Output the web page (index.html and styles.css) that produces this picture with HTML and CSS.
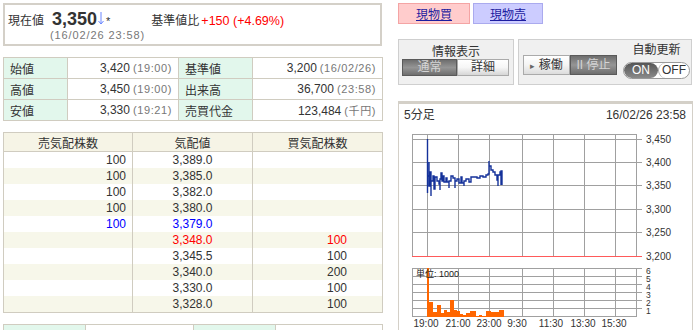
FILE: index.html
```html
<!DOCTYPE html>
<html lang="ja">
<head>
	<meta charset="UTF-8">
	<title>株価ボード</title>
	<link rel="stylesheet" href="styles.css">
</head>
<body>
	<div class="page">
		<div class="left">
			<div class="now">
				<div class="now-row">
					<span class="now-label">現在値</span>
					<span class="now-price">3,350</span>
					<svg class="arrow" width="6" height="13" viewBox="0 0 6 13"><path d="M3 0V12M0.5 9L3 12L5.5 9" fill="none" stroke="#6a86ff" stroke-width="1"/></svg>
					<span class="star">*</span>
					<span class="diff-label">基準値比</span>
					<span class="diff">+150 (+4.69%)</span>
				</div>
				<div class="now-time">(16/02/26 23:58)</div>
			</div>

			<table class="quote">
				<colgroup><col style="width:64px"><col style="width:111px"><col style="width:74px"><col style="width:130px"></colgroup>
				<tr>
					<td class="name">始値</td><td class="val">3,420<small>(19:00)</small></td>
					<td class="name">基準値</td><td class="val">3,200<small>(16/02/26)</small></td>
				</tr>
				<tr>
					<td class="name">高値</td><td class="val">3,450<small>(19:00)</small></td>
					<td class="name">出来高</td><td class="val">36,700<small>(23:58)</small></td>
				</tr>
				<tr>
					<td class="name">安値</td><td class="val">3,330<small>(19:21)</small></td>
					<td class="name">売買代金</td><td class="val">123,484<small>(千円)</small></td>
				</tr>
			</table>

			<table class="book">
				<colgroup><col style="width:129px"><col style="width:120px"><col style="width:130px"></colgroup>
				<thead>
					<tr><th>売気配株数</th><th>気配値</th><th>買気配株数</th></tr>
				</thead>
				<tbody>
					<tr><td class="ask">100</td><td class="px">3,389.0</td><td class="bid"></td></tr>
					<tr><td class="ask">100</td><td class="px">3,385.0</td><td class="bid"></td></tr>
					<tr><td class="ask">100</td><td class="px">3,382.0</td><td class="bid"></td></tr>
					<tr><td class="ask">100</td><td class="px">3,380.0</td><td class="bid"></td></tr>
					<tr class="blue"><td class="ask">100</td><td class="px">3,379.0</td><td class="bid"></td></tr>
					<tr class="red"><td class="ask"></td><td class="px">3,348.0</td><td class="bid">100</td></tr>
					<tr><td class="ask"></td><td class="px">3,345.5</td><td class="bid">100</td></tr>
					<tr><td class="ask"></td><td class="px">3,340.0</td><td class="bid">200</td></tr>
					<tr><td class="ask"></td><td class="px">3,330.0</td><td class="bid">100</td></tr>
					<tr><td class="ask"></td><td class="px">3,328.0</td><td class="bid">100</td></tr>
				</tbody>
			</table>

			<table class="quote">
				<colgroup><col style="width:82px"><col style="width:108px"><col style="width:82px"><col style="width:107px"></colgroup>
				<tr><td class="name"></td><td class="val"></td><td class="name"></td><td class="val"></td></tr>
			</table>
		</div>

		<div class="right">
			<div class="trade">
				<a class="buy" href="javascript:;">現物買</a>
				<a class="sell" href="javascript:;">現物売</a>
			</div>

			<div class="ctrl">
				<div class="box view">
					<div class="box-title">情報表示</div>
					<div class="seg">
						<span class="on">通常</span><span class="off">詳細</span>
					</div>
				</div>
				<div class="box auto">
					<div class="run">
						<span class="go"><i class="tri">▸</i> 稼働</span><span class="stop">II 停止</span>
					</div>
					<div class="upd">
						<div class="upd-title">自動更新</div>
						<div class="pill"><span class="pill-on">ON</span><span class="pill-off">OFF</span></div>
					</div>
				</div>
			</div>

			<div class="chart-box">
				<div class="chart-head"><span>5分足</span><span>16/02/26 23:58</span></div>
				<svg class="chart" width="293" height="200" viewBox="399 130 293 200">
					<g fill="none" stroke="#a0a0a0" stroke-width="1">
						<rect x="412.5" y="134.5" width="224" height="122"/>
						<path d="M412 139.5H642M412 162.5H642M412 185.5H642M412 209.5H642M412 232.5H642"/>
						<path d="M427.5 134V256M458.5 134V256M489.5 134V256M522.5 134V256M553.5 134V256M584.5 134V256M615.5 134V256"/>
						<rect x="412.5" y="268.5" width="224" height="48"/>
						<path d="M412 276.5H642M412 284.5H642M412 292.5H642M412 300.5H642M412 308.5H642M636 268.5H642"/>
						<path d="M427.5 268V317M458.5 268V317M489.5 268V317M522.5 268V317M553.5 268V317M584.5 268V317M615.5 268V317"/>
					</g>
					<path d="M412 256.5H642" stroke="#ff5a5a" stroke-width="1.2"/>
					<path class="price-line" d="M427.5 139V193M427.5 176H429V162V186H430V172H431V196V181H433V176H434V189H435V177H437V181H439V184H440V190V179H441V173H442V181H443V176H444V182H446V178H447V182H449V188V181H451V176H453V178H455V188V181H457V179H459V183H461V177H462V183H464V186V181H466V179H469V182H471V177H474V177H477V178H480V176H483V177H486V175H488V174H489V161V166H491V170H493V172H495V175H497V180H498V186V175H500V172H501V185V171H502V185"/>
					<g class="axis">
						<text x="646" y="143">3,450</text>
						<text x="646" y="166">3,400</text>
						<text x="646" y="189">3,350</text>
						<text x="646" y="213">3,300</text>
						<text x="646" y="236">3,250</text>
						<text x="646" y="260">3,200</text>
					</g>
					<g class="vol-axis">
						<text x="646" y="274">6</text>
						<text x="646" y="282">5</text>
						<text x="646" y="290">4</text>
						<text x="646" y="298">3</text>
						<text x="646" y="306">2</text>
						<text x="646" y="314">1</text>
					</g>
					<g fill="#ff6600">
						<rect x="427" y="268" width="2" height="49"/>
						<rect x="429" y="302" width="4" height="15"/>
						<rect x="433" y="312" width="4" height="5"/>
						<rect x="437" y="305" width="4" height="12"/>
						<rect x="441" y="313" width="3" height="4"/>
						<rect x="444" y="310" width="3" height="7"/>
						<rect x="447" y="312" width="3" height="5"/>
						<rect x="450" y="300" width="4" height="17"/>
						<rect x="454" y="310" width="3" height="7"/>
						<rect x="457" y="311" width="3" height="6"/>
						<rect x="460" y="314" width="3" height="3"/>
						<rect x="463" y="315" width="3" height="2"/>
						<rect x="466" y="313" width="4" height="4"/>
						<rect x="470" y="311" width="6" height="6"/>
						<rect x="476" y="316" width="3" height="1"/>
						<rect x="479" y="315" width="3" height="2"/>
						<rect x="482" y="316" width="4" height="1"/>
						<rect x="486" y="311" width="5" height="6"/>
						<rect x="491" y="312" width="4" height="5"/>
						<rect x="495" y="312" width="4" height="5"/>
						<rect x="499" y="310" width="5" height="7"/>
					</g>
					<text class="unit" x="416" y="277">単位: 1000</text>
					<g class="axis" text-anchor="middle">
						<text x="426" y="327">19:00</text>
						<text x="458" y="327">21:00</text>
						<text x="489" y="327">23:00</text>
						<text x="517" y="327">9:30</text>
						<text x="551" y="327">11:30</text>
						<text x="583" y="327">13:30</text>
						<text x="614" y="327">15:30</text>
					</g>
				</svg>
			</div>
		</div>
	</div>
</body>
</html>
```

FILE: styles.css
```css
*{box-sizing: border-box;}
body{margin: 0;font-family: "Liberation Sans", "Noto Sans CJK JP", sans-serif;font-size: 12px;color: #333;background: #fff;}
table{border-collapse: collapse;table-layout: fixed;}
td,th{padding: 0;}

.page{display: flex;gap: 16px;padding: 3px 0 0 3px;}
.left{width: 379px;flex: none;display: flex;flex-direction: column;gap: 11px;}
.right{width: 295px;flex: none;}

/* 現在値 */
.now{height: 43px;border: 2px solid #d4d0c8;padding: 4px 0 0 3px;}
.now-row{display: flex;align-items: baseline;height: 20px;line-height: 20px;}
.now-price{font-size: 18px;font-weight: bold;margin-left: 8px;}
.arrow{margin: 0 0 -2px 1px;}
.star{font-size: 11px;margin-left: 2px;align-self: flex-start;line-height: 14px;margin-top: 5px;}
.diff-label{margin-left: 41px;}
.diff{color: #f00;font-size: 12.5px;margin-left: 2px;}
.now-time{margin-left: 42px;font-size: 11px;letter-spacing: 0.9px;color: #777;line-height: 12px;}

/* 四本値 */
.quote{width: 379px;}
.quote td{height: 21px;border: 1px solid #d0ccc0;}
.quote .name{background: #e2f7ec;padding-left: 6px;}
.quote .val{text-align: right;padding-right: 6px;}
.quote small{font-size: 11px;color: #777;letter-spacing: 0.6px;margin-left: 3px;}

/* 板 */
.book{width: 379px;border: 1px solid #d0ccc0;}
.book th{height: 19px;background: #f6f4e6;font-weight: normal;border: 1px solid #d0ccc0;}
.book td{height: 16px;line-height: 16px;border-left: 1px solid #d0ccc0;border-right: 1px solid #d0ccc0;}
.book tbody tr:nth-child(even) td{background: #f7f7ea;}
.book .ask{text-align: right;padding-right: 6px;}
.book .px{text-align: center;}
.book .bid{text-align: right;padding-right: 35px;}
.book .blue{color: #00f;}
.book .red{color: #f00;}

/* 注文ボタン */
.trade{display: flex;gap: 3px;height: 21px;}
.trade a{display: flex;align-items: center;justify-content: center;color: #1c1ca0;text-decoration: underline;}
.buy{width: 72px;background: #ffcccc;border: 1px solid #f4a4a4;}
.sell{width: 70px;background: #ccccff;border: 1px solid #aaaaee;}

/* 表示切替 */
.ctrl{display: flex;gap: 4px;margin-top: 15px;}
.box{height: 46px;background: #f0f0f0;border: 1px solid #cfcfcf;}
.view{width: 116px;}
.box-title{text-align: center;padding-top: 5px;line-height: 14px;}
.seg{display: flex;margin-left: 3px;}
.seg span{height: 17px;line-height: 15px;text-align: center;}
.seg .on{width: 55px;background: linear-gradient(#6e6e6e, #959595 50%, #6e6e6e);border: 1px solid #5a5a5a;color: #d4d4d4;}
.seg .off{width: 52px;background: linear-gradient(#fff, #f6f6f6 50%, #d6d6d6);border: 1px solid #aaa;}

.auto{width: 174px;display: flex;padding-left: 4px;}
.run{display: flex;margin-top: 15px;height: 20px;}
.run span{width: 47px;line-height: 18px;text-align: center;font-size: 12px;}
.run .go{background: linear-gradient(#fff, #f4f4f4 50%, #dcdcdc);border: 1px solid #aaa;}
.run .stop{background: linear-gradient(#6e6e6e, #959595 50%, #6e6e6e);border: 1px solid #5a5a5a;color: #d4d4d4;}
.tri{font-style: normal;font-size: 9px;color: #666;}
.upd{margin-left: 6px;display: flex;flex-direction: column;align-items: center;width: 67px;}
.upd-title{padding-top: 3px;line-height: 14px;}
.pill{display: flex;width: 67px;height: 17px;margin-top: 5px;border: 1px solid #999;border-radius: 9px;background: #fff;overflow: hidden;}
.pill span{line-height: 15px;text-align: center;}
.pill-on{width: 34px;background: linear-gradient(#555, #8a8a8a);color: #fff;border-radius: 8px;}
.pill-off{flex: 1;border-left: 1px solid #aaa;border-radius: 8px;}

/* チャート */
.chart-box{margin-top: 16px;width: 295px;height: 300px;border: 1px solid #d4d0c8;border-top-width: 3px;}
.chart-head{display: flex;justify-content: space-between;height: 26px;padding: 3px 6px 0 5px;line-height: 16px;}
.chart{display: block;}
.price-line{fill: none;stroke: #14319a;stroke-width: 1.4;}
.axis{font-size: 10px;fill: #333;}
.vol-axis{font-size: 8.5px;fill: #333;}
.unit{font-size: 9px;fill: #222;}
```
